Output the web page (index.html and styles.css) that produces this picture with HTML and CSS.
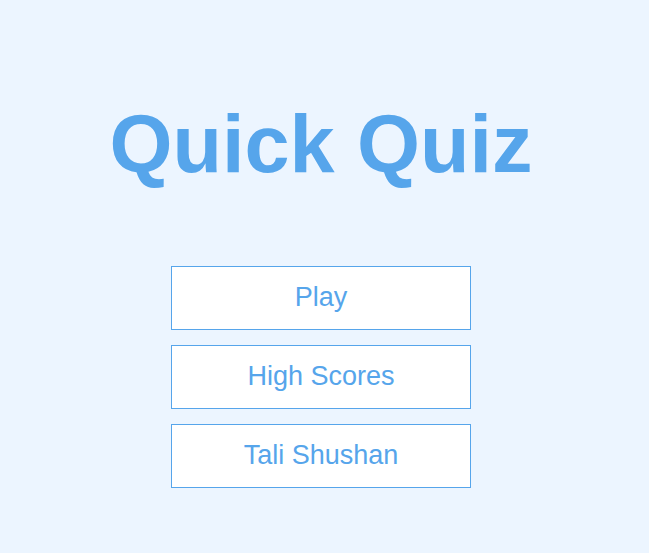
FILE: index.html
```html
<!DOCTYPE html>
<html lang="en">
<head>
<meta charset="utf-8">
<title>Quick Quiz</title>
<link rel="stylesheet" href="styles.css">
</head>
<body>
<div class="container">
  <div class="home">
    <h1 class="title">Quick Quiz</h1>
    <a class="btn" href="#">Play</a>
    <a class="btn" href="#">High Scores</a>
    <a class="btn" href="#">Tali Shushan</a>
  </div>
</div>
</body>
</html>
```
FILE: styles.css
```css
* {
  box-sizing: border-box;
  margin: 0;
  padding: 0;
  font-family: "Liberation Sans", Arial, Helvetica, sans-serif;
}
html, body {
  background-color: #ecf5ff;
  height: 100%;
}
body {
  overflow: hidden;
}
.container {
  display: flex;
  justify-content: center;
  padding: 98px 7px 0 0;
}
.home {
  display: flex;
  flex-direction: column;
  align-items: center;
}
.title {
  font-size: 81px;
  font-weight: 700;
  color: #56a5eb;
  line-height: 93px;
  margin-bottom: 75px;
}
.btn {
  display: block;
  width: 300px;
  height: 64px;
  line-height: 60px;
  text-align: center;
  font-size: 27px;
  color: #56a5eb;
  background-color: #ffffff;
  border: 1px solid #56a5eb;
  text-decoration: none;
  margin-bottom: 15px;
}
```
